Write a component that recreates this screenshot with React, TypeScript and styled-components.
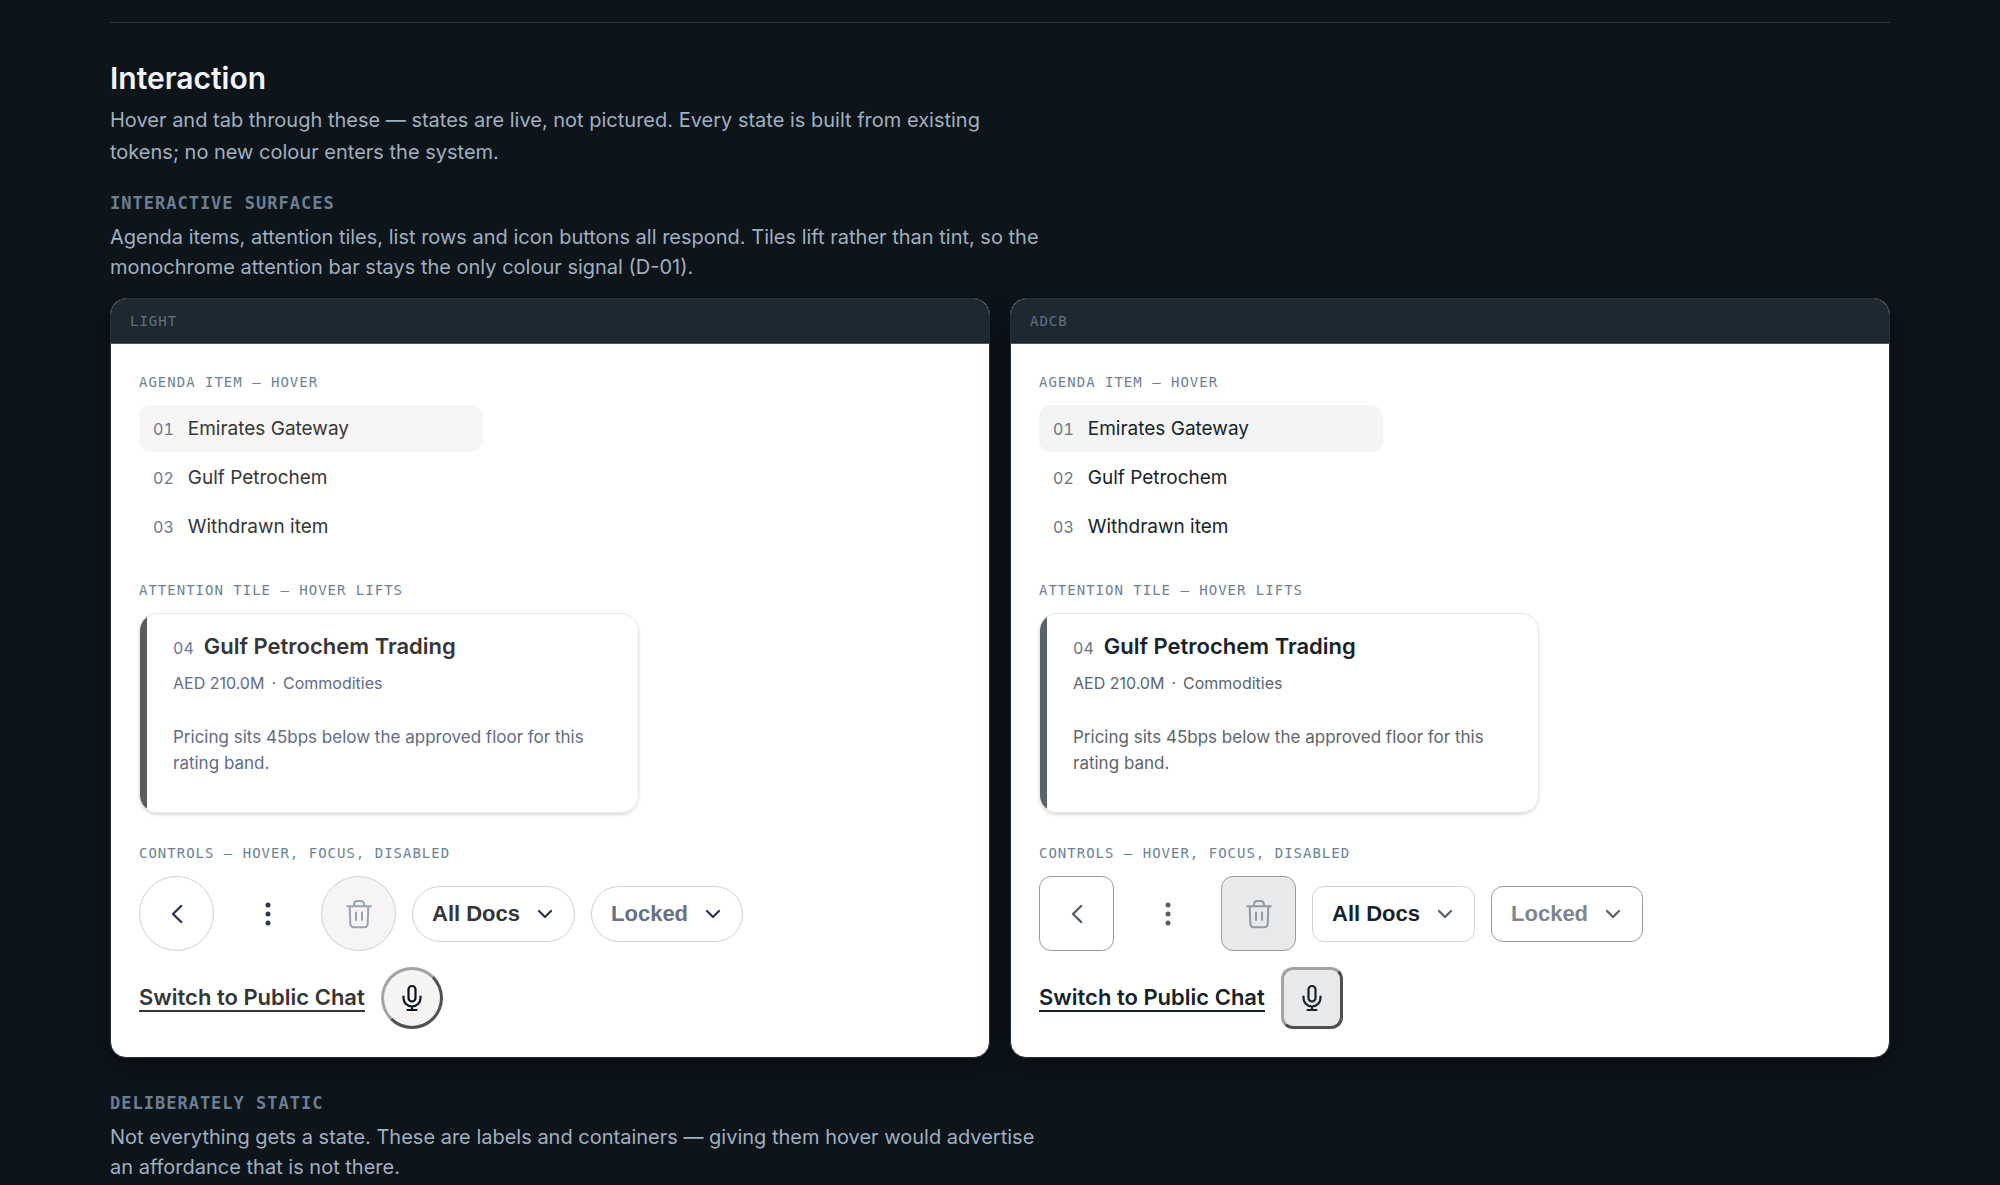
import React from "react";
import styled, { createGlobalStyle, ThemeProvider } from "styled-components";

const ui = `Inter, "Liberation Sans", sans-serif`;
const mono = `"DejaVu Sans Mono", "Liberation Mono", monospace`;

const light = {
  ink: "#363636",
  muted: "#5f6b87",
  index: "#6b7694",
  hover: "#f7f6f4",
  bar: "#5c5c5c",
  tileBorder: "#e6e8ee",
  border: "#cbd0dc",
  pillBorder: "#cbd0dc",
  lockedBorder: "#cbd0dc",
  locked: "#667085",
  icon: "#2a3550",
  trash: "#98a2b8",
  disabled: "#f5f5f5",
  mic: "#0b1328",
  micFill: "#f5f4f2",
  round: "38px",
};

const adcb = {
  ink: "#17232b",
  muted: "#5b656c",
  index: "#6b747b",
  hover: "#f3f5f5",
  bar: "#58646d",
  tileBorder: "#e4e6e8",
  border: "#9b9b9b",
  pillBorder: "#d0d2d4",
  lockedBorder: "#9b9b9b",
  locked: "#7d868c",
  icon: "#555f67",
  trash: "#939a9f",
  disabled: "#e8e9eb",
  mic: "#17232b",
  micFill: "#e8e9eb",
  round: "12px",
};

type Tokens = typeof light;
declare module "styled-components" {
  export interface DefaultTheme extends Tokens {}
}

const GlobalStyle = createGlobalStyle`
  *, *::before, *::after { box-sizing: border-box; }
  html { background: #0d141a; }
  body { margin: 0; font-family: ${ui}; color: #9fb0c0; }
  h2, h3, h4, p, ul { margin: 0; padding: 0; }
  button { cursor: pointer; }
`;

const Page = styled.main`
  height: 100vh;
  overflow: hidden;
  padding: 22px 110px 0;
`;

const Section = styled.section`
  border-top: 1px solid #2b3943;
  padding-top: 35px;
`;

const Title = styled.h2`
  color: #f2f5f7;
  font-size: 30px;
  font-weight: 600;
  line-height: 40px;
`;

const Lead = styled.p`
  max-width: 910px;
  margin-top: 6px;
  font-size: 20px;
  line-height: 32px;
`;

const SubTitle = styled.h3`
  margin-top: 22px;
  color: #6b7f92;
  font-family: ${mono};
  font-size: 17px;
  font-weight: 700;
  letter-spacing: 1px;
  line-height: 26px;
  text-transform: uppercase;
`;

const Note = styled.p`
  max-width: 940px;
  margin-top: 6px;
  font-size: 20px;
  line-height: 30px;
`;

const Panels = styled.div`
  display: grid;
  grid-template-columns: 1fr 1fr;
  gap: 20px;
  margin: 16px 0 32px;
`;

const Card = styled.article`
  border: 1px solid #25323c;
  border-radius: 16px;
  background: #ffffff;
  box-shadow: 0 8px 24px rgba(0, 0, 0, 0.35);
  overflow: hidden;
`;

const CardHead = styled.header`
  padding: 0 19px;
  background: #1e2830;
  border-bottom: 1px solid #4c5962;
  color: #5f7282;
  font-family: ${mono};
  font-size: 14px;
  letter-spacing: 1px;
  line-height: 44px;
  text-transform: uppercase;
`;

const CardBody = styled.div`
  display: flex;
  flex-direction: column;
  gap: 30px;
  padding: 28px;
`;

const Label = styled.h4`
  margin-bottom: 13px;
  color: #6b8296;
  font-family: ${mono};
  font-size: 14px;
  font-weight: 400;
  letter-spacing: 1px;
  line-height: 20px;
  text-transform: uppercase;
`;

const Agenda = styled.ul`
  display: flex;
  flex-direction: column;
  gap: 2px;
  width: 344px;
  list-style: none;
`;

const AgendaButton = styled.button<{ $hovered?: boolean }>`
  display: flex;
  align-items: baseline;
  gap: 14px;
  width: 100%;
  padding: 12px 14px;
  border: 0;
  border-radius: 12px;
  background: ${(p) => (p.$hovered ? p.theme.hover : "transparent")};
  color: ${(p) => p.theme.ink};
  font: 400 19px/23px ${ui};
  text-align: left;
  &:hover { background: ${(p) => p.theme.hover}; }
`;

const Index = styled.span`
  color: ${(p) => p.theme.index};
  font-size: 16px;
  font-weight: 400;
  font-variant-numeric: tabular-nums;
  line-height: 18px;
`;

const Tile = styled.div`
  width: 500px;
  max-width: 100%;
  padding: 16px 28px 36px 33px;
  border: 1px solid ${(p) => p.theme.tileBorder};
  border-radius: 18px;
  background: linear-gradient(to right, ${(p) => p.theme.bar} 7px, #ffffff 7px);
  box-shadow: 0 2px 3px rgba(30, 40, 60, 0.15);
`;

const TileTitle = styled.h4`
  display: flex;
  align-items: baseline;
  gap: 10px;
  color: ${(p) => p.theme.ink};
  font-size: 22px;
  font-weight: 600;
  line-height: 32px;
`;

const TileText = styled.p`
  margin-top: 28px;
  color: ${(p) => p.theme.muted};
  font-size: 17px;
  line-height: 26px;
`;

const TileMeta = styled.p`
  display: flex;
  gap: 7px;
  margin-top: 8px;
  color: ${(p) => p.theme.muted};
  font-size: 16px;
  line-height: 26px;
`;

const Controls = styled.div`
  display: flex;
  flex-wrap: wrap;
  align-items: center;
  gap: 16px;
  max-width: 640px;
`;

const IconButton = styled.button<{ $bare?: boolean }>`
  display: grid;
  place-items: center;
  width: 75px;
  height: 75px;
  padding: 0;
  border: 1px solid ${(p) => (p.$bare ? "transparent" : p.theme.border)};
  border-radius: ${(p) => p.theme.round};
  background: transparent;
  color: ${(p) => p.theme.icon};
  &:disabled {
    background: ${(p) => p.theme.disabled};
    color: ${(p) => p.theme.trash};
    cursor: default;
  }
`;

const Pill = styled.button`
  display: flex;
  align-items: center;
  gap: 15px;
  height: 56px;
  padding: 0 19px;
  border: 1px solid ${(p) => p.theme.pillBorder};
  border-radius: ${(p) => p.theme.round};
  background: #ffffff;
  color: ${(p) => p.theme.ink};
  font: 700 22px/28px "Liberation Sans", Arial, sans-serif;
  svg { color: ${(p) => p.theme.icon}; }
  &:disabled {
    border-color: ${(p) => p.theme.lockedBorder};
    color: ${(p) => p.theme.locked};
    cursor: default;
  }
`;

const SwitchLink = styled.a`
  border-bottom: 2px solid ${(p) => p.theme.ink};
  color: ${(p) => p.theme.ink};
  font-size: 22px;
  font-weight: 600;
  line-height: 26px;
  text-decoration: none;
`;

const MicButton = styled.button`
  display: grid;
  place-items: center;
  width: 62px;
  height: 62px;
  padding: 0;
  border: 3px solid;
  border-color: #a3a3a3 #505050 #505050 #a3a3a3;
  border-radius: ${(p) => p.theme.round};
  background: ${(p) => p.theme.micFill};
  color: ${(p) => p.theme.mic};
`;

const Glyph = styled.svg.attrs({
  fill: "none",
  stroke: "currentColor",
  strokeLinecap: "round",
  strokeLinejoin: "round",
  "aria-hidden": true,
})`
  display: block;
`;

const Back = () => (
  <Glyph width="30" height="30" viewBox="0 0 30 30" strokeWidth="2.4">
    <path d="M19.2 7 11 15l8.2 8" />
  </Glyph>
);

const Dots = () => (
  <Glyph width="30" height="30" viewBox="0 0 30 30">
    {[6, 15, 24].map((y) => (
      <circle key={y} cx="15" cy={y} r="2.5" fill="currentColor" stroke="none" />
    ))}
  </Glyph>
);

const Trash = () => (
  <Glyph width="30" height="30" viewBox="0 0 30 30" strokeWidth="2">
    <path d="M3.3 7.2h23.4M5.7 7.2l.6 17.5q.2 3.5 3.5 3.5h10.4q3.3 0 3.5-3.5l.6-17.5M9.8 7l.5-2.7q.5-2.3 2.7-2.3h4q2.2 0 2.7 2.3l.5 2.7M12 13.5V21M18 13.5V21" />
  </Glyph>
);

const Chevron = () => (
  <Glyph width="20" height="20" viewBox="0 0 20 20" strokeWidth="2.2">
    <path d="m4 7 6 6 6-6" />
  </Glyph>
);

const Mic = () => (
  <Glyph width="28" height="28" viewBox="0 0 28 28" strokeWidth="2.2">
    <path d="M14 2a3.5 3.5 0 0 1 3.5 3.5V14a3.5 3.5 0 0 1-7 0V5.5A3.5 3.5 0 0 1 14 2zM5.5 12.5V14a8.5 8.5 0 0 0 17 0v-1.5M14 22.5V26M9.5 26h9" />
  </Glyph>
);

const agenda = ["Emirates Gateway", "Gulf Petrochem", "Withdrawn item"];

function Surface({ name, tokens }: { name: string; tokens: Tokens }) {
  return (
    <ThemeProvider theme={tokens}>
      <Card>
        <CardHead>{name}</CardHead>
        <CardBody>
          <div>
            <Label>Agenda item — hover</Label>
            <Agenda>
              {agenda.map((item, i) => (
                <li key={item}>
                  <AgendaButton type="button" $hovered={i === 0}>
                    <Index>{`0${i + 1}`}</Index>
                    {item}
                  </AgendaButton>
                </li>
              ))}
            </Agenda>
          </div>
          <div>
            <Label>Attention tile — hover lifts</Label>
            <Tile>
              <TileTitle>
                <Index>04</Index>
                Gulf Petrochem Trading
              </TileTitle>
              <TileMeta>
                <span>AED 210.0M</span>
                <span>·</span>
                <span>Commodities</span>
              </TileMeta>
              <TileText>Pricing sits 45bps below the approved floor for this rating band.</TileText>
            </Tile>
          </div>
          <div>
            <Label>Controls — hover, focus, disabled</Label>
            <Controls>
              <IconButton type="button" aria-label="Back"><Back /></IconButton>
              <IconButton type="button" aria-label="More" $bare><Dots /></IconButton>
              <IconButton type="button" aria-label="Delete" disabled><Trash /></IconButton>
              <Pill type="button">All Docs<Chevron /></Pill>
              <Pill type="button" disabled>Locked<Chevron /></Pill>
              <SwitchLink href="#public-chat">Switch to Public Chat</SwitchLink>
              <MicButton type="button" aria-label="Record"><Mic /></MicButton>
            </Controls>
          </div>
        </CardBody>
      </Card>
    </ThemeProvider>
  );
}

export default function App() {
  return (
    <>
      <GlobalStyle />
      <Page>
        <Section>
          <Title>Interaction</Title>
          <Lead>
            Hover and tab through these — states are live, not pictured. Every state is built from
            existing tokens; no new colour enters the system.
          </Lead>
          <SubTitle>Interactive surfaces</SubTitle>
          <Note>
            Agenda items, attention tiles, list rows and icon buttons all respond. Tiles lift rather
            than tint, so the monochrome attention bar stays the only colour signal (D-01).
          </Note>
          <Panels>
            <Surface name="Light" tokens={light} />
            <Surface name="ADCB" tokens={adcb} />
          </Panels>
          <SubTitle>Deliberately static</SubTitle>
          <Note>
            Not everything gets a state. These are labels and containers — giving them hover would
            advertise an affordance that is not there.
          </Note>
        </Section>
      </Page>
    </>
  );
}
